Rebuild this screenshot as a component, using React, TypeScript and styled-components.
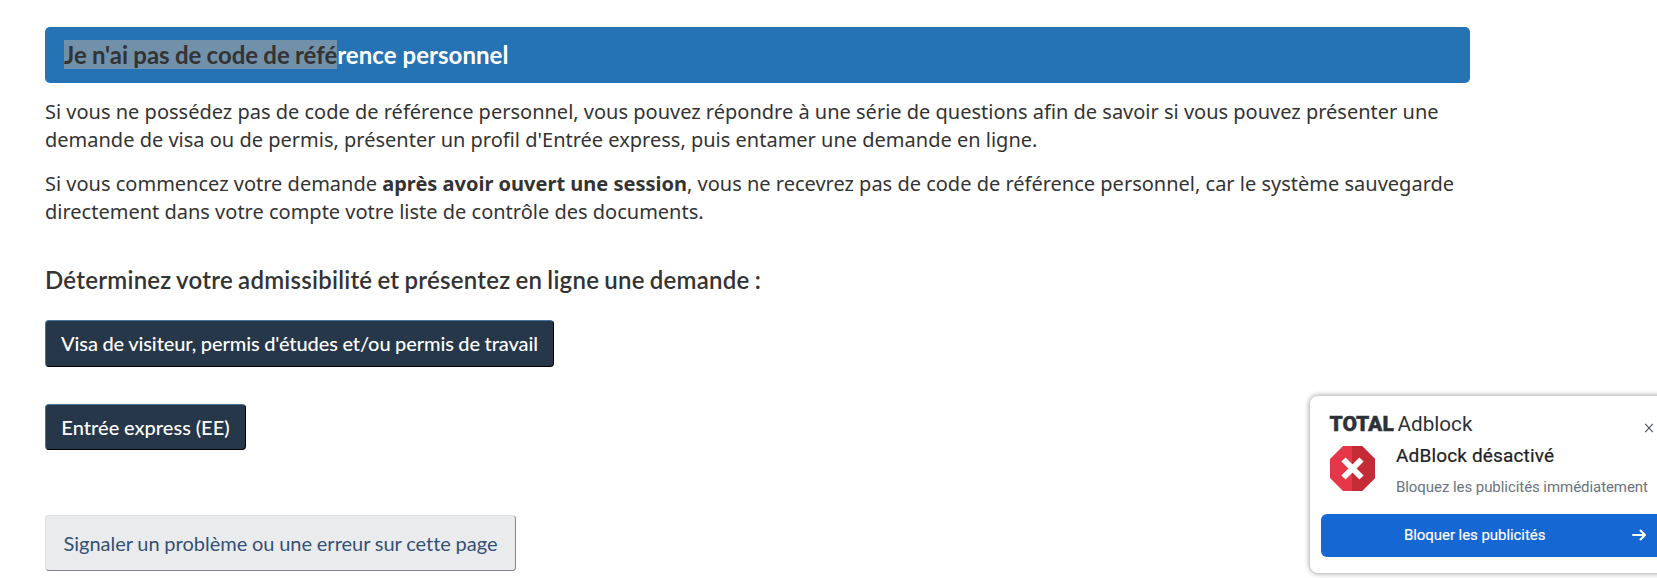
import React from 'react';
import styled, { createGlobalStyle } from 'styled-components';

const GlobalStyle = createGlobalStyle`
  *, *::before, *::after { box-sizing: border-box; }
  body { margin: 0; background: #fff; color: #333; overflow: hidden; }
`;

const Page = styled.div`
  position: relative;
  height: 578px;
  overflow: hidden;
  padding: 27px 0 0 45px;
  font-family: 'Noto Sans', sans-serif;
`;

const Content = styled.main`
  width: 1425px;
  display: flex;
  flex-direction: column;
  align-items: flex-start;
`;

const Banner = styled.h2`
  width: 100%;
  height: 56px;
  margin: 0 0 15px;
  padding: 13px 19px 0;
  border-radius: 5px;
  background: #2572b4;
  color: #fff;
  font: 700 24px/29px Lato, sans-serif;
  letter-spacing: 0.05px;
  white-space: nowrap;
`;

const Selected = styled.span`
  display: inline-block;
  height: 29px;
  background: #7191ab;
  color: #333;
  letter-spacing: -0.02px;
  word-spacing: -0.55px;
`;

const Paragraph = styled.p`
  margin: 0 0 16px;
  font-size: 20px;
  line-height: 28px;
  white-space: nowrap;
`;

const Subheading = styled.h3`
  margin: 23px 0 26px;
  font: 600 24px/29px Lato, sans-serif;
  letter-spacing: 0.25px;
  word-spacing: -1.1px;
  white-space: nowrap;
`;

const Button = styled.button<{ $width: number; $height: number; $gap?: number; $tracking?: number; $light?: boolean }>`
  width: ${(p) => p.$width}px;
  height: ${(p) => p.$height}px;
  margin: 0 0 ${(p) => p.$gap ?? 0}px;
  padding: 0 0 ${(p) => p.$height % 2}px;
  border: 1px solid;
  border-color: ${(p) => (p.$light ? '#dcdee1 #85878a #85878a #dcdee1' : '#4876a4 #000 #000 #4876a4')};
  border-radius: 4px;
  background: ${(p) => (p.$light ? '#eaebed' : '#26374a')};
  color: ${(p) => (p.$light ? '#335075' : '#fff')};
  font: ${(p) => (p.$light ? 400 : 500)} 20px/28px Lato, sans-serif;
  font-variant-ligatures: none;
  letter-spacing: ${(p) => p.$tracking ?? 0}px;
  word-spacing: -0.4px;
  white-space: nowrap;
`;

const Popup = styled.aside`
  position: absolute;
  left: 1310px;
  top: 396px;
  width: 372px;
  height: 177px;
  padding: 16px 0 0 11px;
  border-radius: 8px;
  background: #fff;
  box-shadow: 0 0 5px 1px rgba(0, 0, 0, 0.34);
  font-family: Roboto, sans-serif;
`;

const Brand = styled.div`
  display: flex;
  height: 34px;
  padding-left: 8.5px;
  color: #2d3138;
  line-height: 24px;
`;

const BrandStrong = styled.span`
  width: 68px;
  font-size: 21px;
  font-weight: 900;
  -webkit-text-stroke: 0.4px #2d3138;
`;

const BrandLight = styled.span`
  width: 246px;
  font-size: 20.7px;
`;

const CloseIcon = styled.svg`
  margin-top: 11px;
`;

const Message = styled.div`
  display: flex;
  height: 68px;
  padding-left: 9px;
`;

const MessageText = styled.div`
  margin-left: 21px;
  white-space: nowrap;
`;

const Title = styled.div`
  height: 32px;
  color: #202124;
  font-size: 19px;
  line-height: 20px;
  letter-spacing: 0.15px;
  -webkit-text-stroke: 0.2px #202124;
`;

const Detail = styled.div`
  color: #6a737d;
  font-size: 15px;
  line-height: 18px;
  letter-spacing: -0.06px;
`;

const Action = styled.button`
  display: flex;
  align-items: center;
  width: 350px;
  height: 43px;
  padding: 0 0 1px 83px;
  border: 0;
  border-radius: 6px;
  background: #1567d3;
  color: #fff;
  font: 400 15px/20px Roboto, sans-serif;
  letter-spacing: -0.06px;
  -webkit-text-stroke: 0.15px #fff;
  white-space: nowrap;
`;

const ActionLabel = styled.span`
  width: 228px;
  text-align: left;
`;

export default function App() {
  return (
    <Page>
      <GlobalStyle />
      <Content>
        <Banner>
          <Selected>Je n'ai pas de code de réfé</Selected>rence personnel
        </Banner>
        <Paragraph>
          Si vous ne possédez pas de code de référence personnel, vous pouvez répondre à une série de questions afin de savoir si vous pouvez présenter une
          <br />
          demande de visa ou de permis, présenter un profil d'Entrée express, puis entamer une demande en ligne.
        </Paragraph>
        <Paragraph>
          Si vous commencez votre demande <strong>après avoir ouvert une session</strong>, vous ne recevrez pas de code de référence personnel, car le système sauvegarde
          <br />
          directement dans votre compte votre liste de contrôle des documents.
        </Paragraph>
        <Subheading>Déterminez votre admissibilité et présentez en ligne une demande :</Subheading>
        <Button $width={509} $height={47} $gap={37} $tracking={-0.085}>Visa de visiteur, permis d'études et/ou permis de travail</Button>
        <Button $width={201} $height={46} $gap={65} $tracking={0.04}>Entrée express (EE)</Button>
        <Button $width={471} $height={56} $light>Signaler un problème ou une erreur sur cette page</Button>
      </Content>
      <Popup>
        <Brand>
          <BrandStrong>TOTAL</BrandStrong>
          <BrandLight>Adblock</BrandLight>
          <CloseIcon width="10" height="10" viewBox="0 0 10 10" stroke="#555b63" strokeWidth="1.2">
            <path d="M1.2 0.8l7.6 8.4M8.8 0.8L1.2 9.2" />
          </CloseIcon>
        </Brand>
        <Message>
          <svg width="45" height="45" viewBox="0 0 45 45">
            <path d="M13 0h19l13 13v19L32 45H13L0 32V13z" fill="#e63748" />
            <path d="M22 0h10l13 13v19L32 45H22z" fill="#c42b36" />
            <path d="M13.5 13.5l18 18M31.5 13.5l-18 18" stroke="#fff" strokeWidth="6" />
          </svg>
          <MessageText>
            <Title>AdBlock désactivé</Title>
            <Detail>Bloquez les publicités immédiatement</Detail>
          </MessageText>
        </Message>
        <Action>
          <ActionLabel>Bloquer les publicités</ActionLabel>
          <svg width="14" height="12" viewBox="0 0 14 12" fill="none" stroke="#fff" strokeWidth="2" strokeLinecap="round" strokeLinejoin="round">
            <path d="M1 6h12M8.5 1.5L13 6l-4.5 4.5" />
          </svg>
        </Action>
      </Popup>
    </Page>
  );
}
